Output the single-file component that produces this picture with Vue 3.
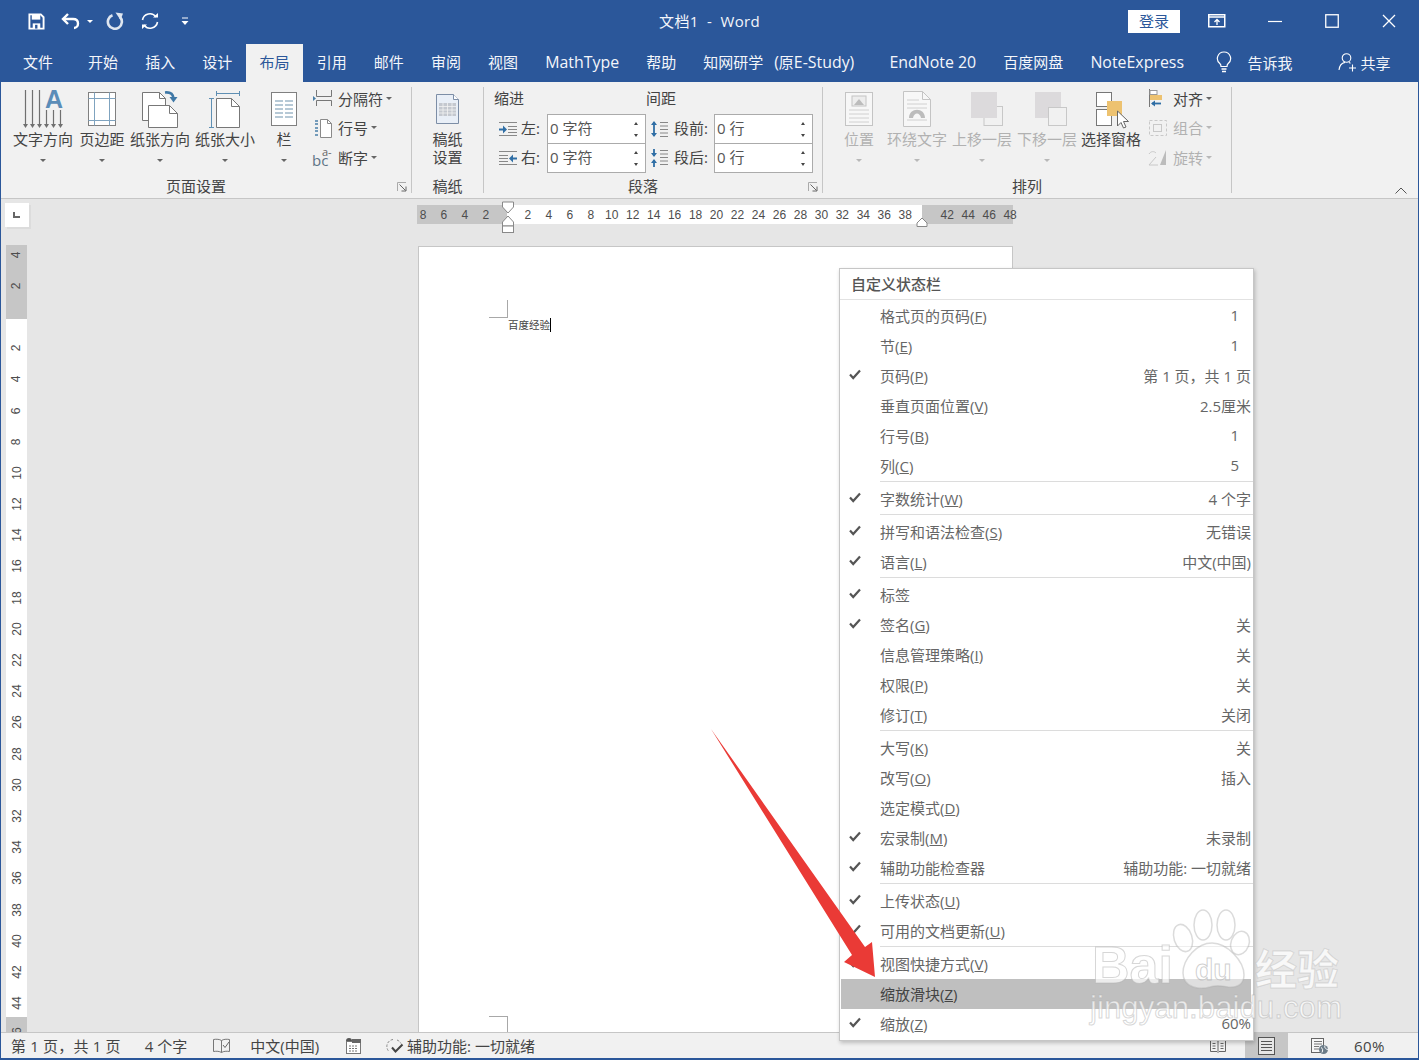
<template>
  <div class="window">
    <!-- title bar -->
    <header class="titlebar">
      <div class="qat">
        <svg class="q-save" width="17" height="17" viewBox="0 0 18 18"><path d="M1.500 1.500h12l3 3v12h-15z" fill="none" stroke="#fff" stroke-width="2"/><rect x="4" y="2" width="9" height="5" fill="#fff"/><rect x="5" y="11" width="8" height="5.500" fill="#fff"/><rect x="7.500" y="12.500" width="2.500" height="4" fill="#2b579a"/></svg>
        <svg class="q-undo" width="20" height="18" viewBox="0 0 20 18"><path d="M7 2 2 7l5 5" fill="none" stroke="#fff" stroke-width="2.400"/><path d="M3 7h9c3.500 0 5 2.200 5 4.500S15.500 16 13 16" fill="none" stroke="#fff" stroke-width="2.400"/></svg>
        <span class="caret white q-undo-caret"></span>
        <svg class="q-redo" width="18" height="18" viewBox="0 0 18 18"><path d="M6.500 3.200A7 7 0 1 0 14 5" fill="none" stroke="#dfe6f0" stroke-width="2.600"/><path d="M9.500 .5 17 1.500 14.500 8z" fill="#dfe6f0"/></svg>
        <svg class="q-sync" width="20" height="18" viewBox="0 0 20 18"><path d="M2.500 8A7.500 7.500 0 0 1 16 5" fill="none" stroke="#fff" stroke-width="1.600"/><path d="M17.500 10A7.500 7.500 0 0 1 4 13" fill="none" stroke="#fff" stroke-width="1.600"/><path d="M13 5.500h5V1zM7 12.500H2V17z" fill="#fff"/></svg>
        <svg class="q-more" width="8" height="9" viewBox="0 0 8 9"><path d="M1 1h6" stroke="#fff"/><path d="M.5 4h7L4 8z" fill="#fff"/></svg>
      </div>
      <div class="doc-title">文档1&nbsp;&nbsp;-&nbsp;&nbsp;Word</div>
      <div class="win-controls">
        <button class="login">登录</button>
        <svg class="w-ribbon" width="18" height="14" viewBox="0 0 18 14"><rect x=".75" y=".75" width="16" height="12" fill="none" stroke="#fff" stroke-width="1.500"/><path d="M1 3h16" stroke="#fff" stroke-width="1.500"/><path d="M9 11V6M6.500 8 9 5.500 11.500 8" fill="none" stroke="#fff" stroke-width="1.300"/></svg>
        <svg class="w-min" width="14" height="14" viewBox="0 0 14 14"><path d="M0 7.500h14" stroke="#fff" stroke-width="1.200"/></svg>
        <svg class="w-max" width="14" height="14" viewBox="0 0 14 14"><rect x=".75" y=".75" width="12.500" height="12.500" fill="none" stroke="#fff" stroke-width="1.300"/></svg>
        <svg class="w-close" width="14" height="14" viewBox="0 0 14 14"><path d="M1 1l12 12M13 1 1 13" stroke="#fff" stroke-width="1.300"/></svg>
      </div>
    </header>

    <!-- tabs -->
    <nav class="tabs">
      <span class="tab file">文件</span>
      <span v-for="t in tabs" :key="t" class="tab" :class="{ active: t === '布局', lat: t === 'MathType' }">{{ t }}</span>
      <span class="tab wide">知网研学 &nbsp;<span class="lat paren">(</span>原<span class="lat">E-Study)</span></span>
      <span class="tab lat">EndNote 20</span>
      <span class="tab">百度网盘</span>
      <span class="tab lat">NoteExpress</span>
      <svg class="bulb" width="16" height="22" viewBox="0 0 16 22"><path d="M8 1a6.500 6.500 0 0 0-4 11.700c.8.700 1 1.500 1 2.800h6c0-1.300.2-2.100 1-2.800A6.500 6.500 0 0 0 8 1z" fill="none" stroke="#fff" stroke-width="1.200"/><path d="M5.500 18h5M6 20.500h4" stroke="#fff" stroke-width="1.500"/></svg>
      <span class="tell">告诉我</span>
      <svg class="share-ic" width="20" height="20" viewBox="0 0 20 20"><circle cx="8.500" cy="6" r="4.300" fill="none" stroke="#fff" stroke-width="1.100"/><path d="M1 18c.5-4.500 3-7 6-7.600M11 10.500l1.500.7" fill="none" stroke="#fff" stroke-width="1.100"/><path d="M14.500 12.500v7M11 16h7" stroke="#fff" stroke-width="1.100"/></svg>
      <span class="share">共享</span>
    </nav>

    <!-- ribbon -->
    <section class="ribbon">
      <div class="group g-page">
        <div class="group-body">
          <div class="big w66">
            <svg width="44" height="44" viewBox="0 0 44 44">
              <g stroke="#707070" stroke-width="1.200" fill="none"><path d="M4.500 3v36M11.500 3v36M18.500 3v36M25.500 23v16M32.500 23v16M39.500 23v16"/></g>
              <path d="M2 37h5l-2.500 4zM9 37h5l-2.500 4zM16 37h5l-2.500 4zM23 37h5l-2.500 4zM30 37h5l-2.500 4zM37 37h5l-2.500 4z" fill="#707070"/>
              <text x="33" y="21" class="icon-a">A</text>
            </svg>
            <span>文字方向</span><i class="caret"></i>
          </div>
          <div class="big w52">
            <svg width="44" height="44" viewBox="0 0 44 44"><rect x="8.500" y="5.500" width="27" height="33" fill="#fff" stroke="#808080"/><path d="M14.500 5.500v33M29.500 5.500v33M8.500 11.500h27M8.500 33.500h27" stroke="#7fa3bf"/></svg>
            <span>页边距</span><i class="caret"></i>
          </div>
          <div class="big w64">
            <svg width="44" height="44" viewBox="0 0 44 44"><path d="M4.500 5.500h17l6 6v22h-23z" fill="#fff" stroke="#777"/><path d="M21.500 5.500v6h6" fill="none" stroke="#777"/><path d="M10.500 18.500h21l8 8v14h-29z" fill="#fff" stroke="#777"/><path d="M31.500 18.500v8h8" fill="none" stroke="#777"/><path d="M27 5.500c5-.5 8 1 8.500 6" fill="none" stroke="#3f78a6" stroke-width="2.600"/><path d="M31.500 10l4 5.500 4-5.500z" fill="#3f78a6"/></svg>
            <span>纸张方向</span><i class="caret"></i>
          </div>
          <div class="big w66">
            <svg width="44" height="44" viewBox="0 0 44 44"><path d="M13.500 11.500h15l8 8v21h-23z" fill="#fff" stroke="#777"/><path d="M28.500 11.500v8h8" fill="none" stroke="#777"/><path d="M13.500 6.500h23M13.500 4v5M36.500 4v5M8.500 11.500v29M6 11.500h5M6 40.500h5" stroke="#5f8fb3" fill="none"/></svg>
            <span>纸张大小</span><i class="caret"></i>
          </div>
          <div class="big w52">
            <svg width="44" height="44" viewBox="0 0 44 44"><rect x="9.500" y="5.500" width="25" height="33" fill="#fff" stroke="#808080"/><path d="M13 14h8M23 14h8M13 18h8M23 18h8M13 22h8M23 22h8M13 26h8M23 26h8M13 30h8M23 30h8" stroke="#6e93ad"/></svg>
            <span>栏</span><i class="caret"></i>
          </div>
          <div class="small-stack">
            <div class="small">
              <svg width="22" height="20" viewBox="0 0 22 20"><path d="M4.500 2v6.500h15V2M4.500 18v-5.500h15V18" fill="none" stroke="#777"/><path d="M1 8l3 2.500L1 13z" fill="#4a7fa8"/></svg>
              <span>分隔符</span><i class="caret"></i>
            </div>
            <div class="small">
              <svg width="22" height="20" viewBox="0 0 22 20"><path d="M8.500 1.500h7l4 4v14h-11z" fill="#fff" stroke="#8a8a8a"/><path d="M15.500 1.500v4h4" fill="none" stroke="#8a8a8a"/><path d="M3 3h3M3 6h3M3 10h3M3 13h3M3 17h3" stroke="#4a7fa8" stroke-width="1.300"/></svg>
              <span>行号</span><i class="caret"></i>
            </div>
            <div class="small">
              <svg width="22" height="20" viewBox="0 0 22 20"><text x="0" y="19" class="icon-bc">bc</text><text x="10" y="9" class="icon-hy">a-</text></svg>
              <span>断字</span><i class="caret"></i>
            </div>
          </div>
        </div>
        <div class="group-label">页面设置<svg class="launcher" width="10" height="10" viewBox="0 0 10 10"><path d="M.5 9V.5H9" fill="none" stroke="#aaa"/><path d="M2.500 2.500l6 6M9 4.500V9H4.500" fill="none" stroke="#666"/></svg></div>
      </div>

      <div class="group g-paper">
        <div class="group-body">
          <div class="big paper-btn">
            <svg width="44" height="44" viewBox="0 0 44 44"><path d="M10.500 7.500h17l5 5v24h-22z" fill="#e9eff7" stroke="#7d8ea6"/><path d="M27.500 7.500v5h5" fill="#fff" stroke="#7d8ea6"/><rect x="13" y="16" width="17" height="13" fill="#c4c8cf"/><path d="M13 19.500h17M13 23h17M13 26h17M17 16v13M21.500 16v13M26 16v13" stroke="#f3f3f3" stroke-width=".8"/></svg>
            <span>稿纸<br>设置</span>
          </div>
        </div>
        <div class="group-label">稿纸</div>
      </div>

      <div class="group g-para">
        <div class="group-body para">
          <div class="para-head"><span class="h-indent">缩进</span><span>间距</span></div>
          <div class="para-row">
            <svg class="p-ic" width="20" height="20" viewBox="0 0 20 20"><path d="M1 3.500h18M10 7.500h9M10 10.500h9M10 13.500h9M1 16.500h18" stroke="#888"/><path d="M1 10.500h5" stroke="#2f6ea5" stroke-width="2"/><path d="M5 6.500l4 4-4 4z" fill="#2f6ea5"/></svg>
            <label class="p-lab">左:</label>
            <div class="spin"><span>0 字符</span><i class="arrows"><b class="up"></b><b class="down"></b></i></div>
            <svg class="p-ic2" width="20" height="20" viewBox="0 0 20 20"><path d="M11 3.500h8M11 7h8M11 10.500h8M11 14h8M11 17.500h8" stroke="#888"/><path d="M5 3v14" stroke="#2f6ea5" stroke-width="1.800"/><path d="M2 6l3-4 3 4zM2 14l3 4 3-4z" fill="#2f6ea5"/></svg>
            <label class="p-lab2">段前:</label>
            <div class="spin"><span>0 行</span><i class="arrows"><b class="up"></b><b class="down"></b></i></div>
          </div>
          <div class="para-row second">
            <svg class="p-ic" width="20" height="20" viewBox="0 0 20 20"><path d="M1 3.500h18M1 7.500h9M1 10.500h9M1 13.500h9M1 16.500h18" stroke="#888"/><path d="M14 10.500h5" stroke="#2f6ea5" stroke-width="2"/><path d="M15 6.500l-4 4 4 4z" fill="#2f6ea5"/></svg>
            <label class="p-lab">右:</label>
            <div class="spin"><span>0 字符</span><i class="arrows"><b class="up"></b><b class="down"></b></i></div>
            <svg class="p-ic2" width="20" height="20" viewBox="0 0 20 20"><path d="M11 2.500h8M11 6h8M11 9.500h8M11 13h8M11 16.500h8" stroke="#888"/><path d="M5 1v7M5 12v7" stroke="#2f6ea5" stroke-width="1.800"/><path d="M2 5l3 4 3-4zM2 15l3-4 3 4z" fill="#2f6ea5"/></svg>
            <label class="p-lab2">段后:</label>
            <div class="spin"><span>0 行</span><i class="arrows"><b class="up"></b><b class="down"></b></i></div>
          </div>
        </div>
        <div class="group-label">段落<svg class="launcher" width="10" height="10" viewBox="0 0 10 10"><path d="M.5 9V.5H9" fill="none" stroke="#aaa"/><path d="M2.500 2.500l6 6M9 4.500V9H4.500" fill="none" stroke="#666"/></svg></div>
      </div>

      <div class="group g-arrange">
        <div class="group-body">
          <div class="big w52 off">
            <svg width="44" height="44" viewBox="0 0 44 44"><rect x="8.500" y="5.500" width="27" height="33" fill="#f7f7f7" stroke="#c4c4c4"/><rect x="15" y="9" width="14" height="10" fill="#ededed" stroke="#c4c4c4"/><path d="M17 18l5-6 5 6z" fill="#bcbcbc"/><path d="M12 23h20M12 27h20M12 31h20M12 35h20" stroke="#d0d0d0"/></svg>
            <span>位置</span><i class="caret"></i>
          </div>
          <div class="big w64 off">
            <svg width="44" height="44" viewBox="0 0 44 44"><path d="M8.500 4.500h19l8 8v27h-27z" fill="#f7f7f7" stroke="#c4c4c4"/><path d="M27.500 4.500v8h8" fill="none" stroke="#c4c4c4"/><path d="M12 13h12M12 17h20M12 21h20M12 33h20" stroke="#d0d0d0"/><path d="M14 31c0-11 16-11 16 0h-4c-1-6-7-6-8 0z" fill="#bcbcbc"/></svg>
            <span>环绕文字</span><i class="caret"></i>
          </div>
          <div class="big w66 off">
            <svg width="44" height="44" viewBox="0 0 44 44"><rect x="24" y="19.500" width="18.500" height="19" fill="none" stroke="#c8c8c8"/><rect x="11" y="5" width="26" height="26" fill="#dcdadc"/></svg>
            <span>上移一层</span><i class="caret"></i>
          </div>
          <div class="big w64 off">
            <svg width="44" height="44" viewBox="0 0 44 44"><rect x="10" y="5" width="26" height="26" fill="#dcdadc"/><rect x="23.500" y="20.500" width="18" height="18" fill="#f1f1f1" stroke="#c8c8c8"/></svg>
            <span>下移一层</span><i class="caret"></i>
          </div>
          <div class="big w64">
            <svg width="44" height="44" viewBox="0 0 44 44"><rect x="7.500" y="5.500" width="15" height="14" fill="#fff" stroke="#777"/><rect x="7.500" y="22.500" width="15" height="16" fill="#fff" stroke="#777"/><rect x="18" y="14" width="15" height="15" fill="#edc270"/><path d="M28.500 24v15l3.500-3.500 2.500 5.500 2.500-1-2.500-5.500h5z" fill="#fff" stroke="#666"/></svg>
            <span>选择窗格</span>
          </div>
          <div class="small-stack arrange-stack">
            <div class="small">
              <svg width="22" height="20" viewBox="0 0 22 20"><path d="M2.500 1v18" stroke="#777"/><rect x="3" y="2.500" width="7" height="4" fill="#fff" stroke="#999"/><rect x="3" y="7" width="12" height="5" fill="#edc270"/><path d="M5 15.500h9" stroke="#2f6ea5" stroke-width="1.800"/><path d="M8 12.500 4 15.500l4 3z" fill="#2f6ea5"/></svg>
              <span>对齐</span><i class="caret"></i>
            </div>
            <div class="small off">
              <svg width="22" height="20" viewBox="0 0 22 20"><rect x="2.500" y="2.500" width="17" height="15" fill="none" stroke="#c8c8c8" stroke-dasharray="3 2"/><rect x="6.500" y="6.500" width="8" height="7" fill="none" stroke="#c8c8c8"/></svg>
              <span>组合</span><i class="caret"></i>
            </div>
            <div class="small off">
              <svg width="22" height="20" viewBox="0 0 22 20"><path d="M19 18V3l-6 15z" fill="#bcbcbc"/><path d="M11 18H2l7-8" fill="none" stroke="#c8c8c8"/><path d="M2 7c2-3 5-3 7-1" fill="none" stroke="#c8c8c8"/></svg>
              <span>旋转</span><i class="caret"></i>
            </div>
          </div>
        </div>
        <div class="group-label">排列</div>
      </div>

      <div class="ribbon-rest">
        <svg width="12" height="7" viewBox="0 0 12 7"><path d="M.5 6.500 6 1l5.500 5.500" fill="none" stroke="#555"/></svg>
      </div>
    </section>

    <!-- document area -->
    <main class="doc-area">
      <div class="ruler-row">
        <div class="tab-stop"><i></i></div>
        <div class="h-ruler">
          <span v-for="(n, i) in hNumbers" :key="i" class="h-num">{{ n }}</span>
          <svg class="marker-left" width="14" height="32" viewBox="0 0 14 32"><path d="M1.500 1h11v5l-5.500 6-5.500-6z" fill="#fff" stroke="#888"/><path d="M7 15l5.500 6v4h-11v-4z" fill="#fff" stroke="#888"/><rect x="1.500" y="25" width="11" height="6.500" fill="#fff" stroke="#888"/></svg>
          <svg class="marker-right" width="12" height="10" viewBox="0 0 12 10"><path d="M6 1l5 5v3.500H1V6z" fill="#fff" stroke="#888"/></svg>
        </div>
      </div>
      <div class="doc-row">
        <div class="v-ruler">
          <span v-for="(n, i) in vNumbers" :key="i" class="v-num"><em>{{ n }}</em></span>
        </div>
        <div class="page">
          <div class="crop-top"></div>
          <div class="page-text"><span>百度经验</span></div>
          <div class="crop-bottom"></div>
        </div>
      </div>
    </main>

    <!-- status bar -->
    <footer class="status">
      <span class="s-pages">第 1 页，共 1 页</span>
      <span class="s-words">4 个字</span>
      <svg class="s-book" width="19" height="16" viewBox="0 0 19 16"><path d="M9.500 2.500c-2-1.300-5-1.500-8-1v12c3-.5 6-.3 8 1 2-1.300 5-1.500 8-1v-12c-3-.5-6-.3-8 1zM9.500 2.500v12" fill="none" stroke="#777"/><path d="M11 7l2 2.500L17 4" fill="none" stroke="#666"/></svg>
      <span class="s-lang">中文(中国)</span>
      <svg class="s-macro" width="15" height="16" viewBox="0 0 15 16"><circle cx="3" cy="3" r="3" fill="#555"/><rect x=".5" y="3.500" width="14" height="12" fill="#fff" stroke="#777"/><rect x="6" y="1" width="9" height="4" fill="#666"/><path d="M3 8h9M3 10.500h9M3 13h9" stroke="#777" stroke-dasharray="2 1"/></svg>
      <svg class="s-access" width="20" height="18" viewBox="0 0 20 18"><path d="M8 2.500a7 7 0 0 0-4 12" fill="none" stroke="#888" stroke-dasharray="2.500 1.500"/><path d="M12 3a7 7 0 0 1 4 3.500" fill="none" stroke="#888" stroke-dasharray="2.500 1.500"/><path d="M7 10.500l3.500 4 7-7" fill="none" stroke="#444" stroke-width="2"/></svg>
      <span class="s-acc-text">辅助功能: 一切就绪</span>
      <span class="s-gap"></span>
      <svg class="s-read" width="16" height="14" viewBox="0 0 16 14"><path d="M.5 1.500h6.500l1 1 1-1h6.500v11H9l-1 1-1-1H.5z" fill="none" stroke="#666"/><path d="M8 2.500v10M2.500 4.500h3M2.500 7h3M2.500 9.500h3M10.500 4.500h3M10.500 7h3M10.500 9.500h3" stroke="#666"/></svg>
      <div class="s-print"><svg width="17" height="18" viewBox="0 0 17 18"><rect x=".5" y=".5" width="16" height="17" fill="#e6e6e6" stroke="#555"/><path d="M3 4.500h11M3 7.500h11M3 10.500h11M3 13.500h11" stroke="#555"/></svg></div>
      <svg class="s-web" width="18" height="18" viewBox="0 0 18 18"><rect x=".5" y="1.500" width="12" height="14" fill="#f7f7f7" stroke="#666"/><path d="M3 4.500h8M3 7h8M3 9.500h5M3 12h5" stroke="#777"/><circle cx="12.500" cy="12.500" r="4.500" fill="#6c7c88"/><path d="M10 10.500c2 1 2 3 1 5M14 8.500c-1 2 1 4 3 4" fill="none" stroke="#fff"/></svg>
      <span class="s-zoom">60%</span>
    </footer>

    <!-- context menu -->
    <div class="menu">
      <div class="menu-title">自定义状态栏</div>
      <template v-for="row in menuRows" :key="row.label">
        <div v-if="row.sep" class="menu-sep"></div>
        <div class="menu-row" :class="{ hover: row.hover }">
          <span class="menu-check">
            <svg v-if="row.on" width="12" height="11" viewBox="0 0 12 11"><path d="M1 5.500 4.200 9 11 1.500" fill="none" stroke="#555" stroke-width="2.200"/></svg>
          </span>
          <span class="menu-label">{{ row.label }}<template v-if="row.key">(<u>{{ row.key }}</u>)</template></span>
          <span class="menu-value" :class="{ num: row.num }">{{ row.value }}</span>
        </div>
      </template>
    </div>

    <!-- red arrow on top of screenshot -->
    <svg class="red-arrow" width="180" height="260" viewBox="0 0 180 260">
      <path d="M1 1 155 219l7-5 3 35-31-15 8-7z" fill="#ea3a36"/>
    </svg>

    <!-- watermark -->
    <svg class="watermark" width="270" height="130" viewBox="0 0 270 130">
      <g class="wm-paw">
        <ellipse cx="96" cy="33" rx="9" ry="14" transform="rotate(-18 96 33)"/>
        <ellipse cx="116" cy="20" rx="9" ry="15"/>
        <ellipse cx="139" cy="20" rx="9" ry="15"/>
        <ellipse cx="153" cy="38" rx="9" ry="12" transform="rotate(20 153 38)"/>
        <path d="M96 68c0-14 14-30 29-30s32 18 32 32c0 10-8 13-16 12-6-1-12-2-18 0-10 3-27 1-27-14z"/>
      </g>
      <text x="5" y="78" class="wm-bai">Bai</text>
      <text x="108" y="75" class="wm-du">du</text>
      <text x="168" y="80" class="wm-cn">经验</text>
      <text x="3" y="113" class="wm-url" textLength="252" lengthAdjust="spacingAndGlyphs">jingyan.baidu.com</text>
    </svg>
  </div>
</template>

<script setup>
const tabs = ['开始', '插入', '设计', '布局', '引用', '邮件', '审阅', '视图', 'MathType', '帮助']

// null leaves a blank cell where the ruler has no label
const hNumbers = [8, 6, 4, 2, null, 2, 4, 6, 8, 10, 12, 14, 16, 18, 20, 22, 24, 26, 28, 30, 32, 34, 36, 38, null, 42, 44, 46, 48]
const vNumbers = [4, 2, null]
for (let n = 2; n <= 44; n += 2) vNumbers.push(n)
vNumbers.push(46)

const menuRows = [
  { label: '格式页的页码', key: 'F', value: '1', num: true },
  { label: '节', key: 'E', value: '1', num: true },
  { label: '页码', key: 'P', value: '第 1 页，共 1 页', on: true },
  { label: '垂直页面位置', key: 'V', value: '2.5厘米' },
  { label: '行号', key: 'B', value: '1', num: true },
  { label: '列', key: 'C', value: '5', num: true },
  { label: '字数统计', key: 'W', value: '4 个字', on: true, sep: true },
  { label: '拼写和语法检查', key: 'S', value: '无错误', on: true, sep: true },
  { label: '语言', key: 'L', value: '中文(中国)', on: true },
  { label: '标签', value: '', on: true, sep: true },
  { label: '签名', key: 'G', value: '关', on: true },
  { label: '信息管理策略', key: 'I', value: '关' },
  { label: '权限', key: 'P', value: '关' },
  { label: '修订', key: 'T', value: '关闭' },
  { label: '大写', key: 'K', value: '关', sep: true },
  { label: '改写', key: 'O', value: '插入' },
  { label: '选定模式', key: 'D', value: '' },
  { label: '宏录制', key: 'M', value: '未录制', on: true },
  { label: '辅助功能检查器', value: '辅助功能: 一切就绪', on: true },
  { label: '上传状态', key: 'U', value: '', on: true, sep: true },
  { label: '可用的文档更新', key: 'U', value: '', on: true },
  { label: '视图快捷方式', key: 'V', value: '', on: true, sep: true },
  { label: '缩放滑块', key: 'Z', value: '', hover: true },
  { label: '缩放', key: 'Z', value: '60%', on: true },
]
</script>

<style>
html, body { margin: 0; overflow: hidden; background: #e6e6e6; }
</style>

<style scoped>
.window {
  position: relative;
  width: 1419px;
  height: 1060px;
  box-sizing: border-box;
  border: 1px solid #2b579a;
  border-width: 0 1px 2px 1px;
  display: flex;
  flex-direction: column;
  overflow: hidden;
  font-family: "Open Sans", "Noto Sans CJK SC", sans-serif;
  font-size: 15px;
  color: #444;
  background: #e6e6e6;
}

/* title bar */
.titlebar {
  height: 42px;
  flex: none;
  background: #2b579a;
  color: #fff;
  display: grid;
  grid-template-columns: 1fr auto 1fr;
  align-items: center;
}
.qat { display: flex; align-items: center; }
.qat svg { flex: none; }
.q-save { margin-left: 27px; }
.q-undo { margin-left: 16px; }
.q-undo-caret { margin-left: 6px; }
.q-redo { margin-left: 13px; }
.q-sync { margin-left: 16px; }
.q-more { margin-left: 21px; }
.doc-title { font-size: 15px; color: #f4f6fa; padding-bottom: 2px; letter-spacing: .3px; }
.win-controls { display: flex; align-items: center; justify-content: flex-end; }
.login {
  width: 52px;
  height: 23px;
  border: 0;
  padding: 0;
  background: #fff;
  color: #2b579a;
  font: inherit;
  line-height: 23px;
}
.w-ribbon { margin-left: 28px; }
.w-min { margin-left: 42px; }
.w-max { margin-left: 43px; }
.w-close { margin-left: 43px; margin-right: 22px; }

/* tabs */
.tabs {
  height: 40px;
  flex: none;
  background: #2b579a;
  color: #f4f6fa;
  display: flex;
  align-items: center;
  padding-left: 9px;
  white-space: nowrap;
}
.tab {
  padding: 0 13.57px;
  height: 38px;
  margin-top: 2px;
  line-height: 36px;
}
.tab.file { margin-right: 8px; padding-left: 13px; padding-right: 13.5px; }
.tab.active { background: #f1f1f1; color: #2b579a; }
.tab.wide { margin-right: 8px; }
.lat { font-size: 15.9px; }
.paren { margin-left: 3px; }
.bulb { margin-left: 18px; flex: none; }
.tell { margin-left: 16px; }
.share-ic { margin-left: 45px; flex: none; }
.share { margin-left: 3px; }

/* ribbon */
.ribbon {
  height: 117px;
  flex: none;
  box-sizing: border-box;
  background: #f1f1f1;
  border-bottom: 1px solid #c6c6c6;
  display: flex;
  align-items: flex-start;
  padding-top: 5px;
}
.group {
  height: 106px;
  display: flex;
  flex-direction: column;
  border-right: 1px solid #c6c6c6;
  box-sizing: content-box;
  flex: none;
}
.g-page { width: 410px; }
.g-paper { width: 71px; }
.g-para { width: 338px; }
.g-arrange { width: 408px; }
.group-body { display: flex; height: 90px; flex: none; }
.g-page .group-body { padding-left: 9px; }
.g-arrange .group-body { padding-left: 10px; }
.group-label {
  position: relative;
  height: 16px;
  line-height: 18px;
  text-align: center;
}
.g-page .group-label, .g-para .group-label { padding-right: 20px; }
.launcher { position: absolute; right: 4px; top: 5px; }

.big {
  display: flex;
  flex-direction: column;
  align-items: center;
  flex: none;
  line-height: 18px;
  white-space: nowrap;
  text-align: center;
}
.big svg { flex: none; margin-bottom: -1px; overflow: visible; }
.w66 { width: 66px; }
.w64 { width: 64px; }
.w52 { width: 52px; }
.paper-btn { width: 71px; }
.big .caret { margin-top: 11px; }
.off { color: #b1b1b1; }
.off .caret { border-top-color: #b8b8b8; }

.caret {
  display: inline-block;
  width: 0;
  height: 0;
  border: 3px solid transparent;
  border-top: 3px solid #666;
  border-bottom: 0;
  flex: none;
}
.caret.white { border-top-color: #fff; }

.small-stack {
  display: flex;
  flex-direction: column;
  margin-left: 2px;
  margin-top: -3.5px;
}
.arrange-stack { margin-left: 4px; }
.small {
  height: 29.5px;
  display: flex;
  align-items: center;
  white-space: nowrap;
}
.small svg { flex: none; margin-right: 4px; overflow: visible; }
.small .caret { margin-left: 3px; }
.icon-a { font: bold 25px "Liberation Sans", sans-serif; fill: #5b8db8; text-anchor: middle; }
.icon-bc { font: 15px "Open Sans", sans-serif; fill: #5e7486; }
.icon-hy { font: 11px "Open Sans", sans-serif; fill: #666; }

/* paragraph group */
.para { flex-direction: column; padding-left: 10px; }
.para-head { display: flex; height: 27px; line-height: 22px; }
.h-indent { width: 152px; }
.para-row { display: flex; align-items: center; height: 30px; }
.para-row.second { margin-top: -1px; }
.para-row label, .spin span { margin-bottom: 4px; }
.p-ic { margin-left: 4px; flex: none; }
.p-lab { margin-left: 3px; width: 26px; flex: none; }
.p-ic2 { margin-left: 3px; flex: none; }
.p-lab2 { margin-left: 5px; width: 40px; flex: none; }
.spin {
  width: 99px;
  height: 30px;
  box-sizing: border-box;
  border: 1px solid #ababab;
  background: #fff;
  display: flex;
  align-items: center;
  justify-content: space-between;
  padding: 0 7px 0 2px;
  flex: none;
  color: #555;
}
.arrows { display: flex; flex-direction: column; gap: 9px; }
.arrows b { display: block; width: 0; height: 0; border: 2.5px solid transparent; }
.arrows .up { border-top: 0; border-bottom: 3px solid #444; }
.arrows .down { border-bottom: 0; border-top: 3px solid #444; }

.ribbon-rest {
  flex: 1;
  height: 107px;
  display: flex;
  align-items: flex-end;
  justify-content: flex-end;
  padding: 0 11px 0 0;
}

/* document area */
.doc-area { flex: 1; min-height: 0; display: flex; flex-direction: column; }
.ruler-row { height: 46px; flex: none; display: flex; align-items: flex-start; }
.tab-stop {
  width: 24px;
  height: 24px;
  margin: 4px 0 0 4px;
  background: #fff;
  box-shadow: 2px 2px 0 #dcdcdc;
  position: relative;
  flex: none;
}
.tab-stop i {
  display: block;
  position: absolute;
  left: 8px;
  top: 9px;
  border-left: 2px solid #666;
  border-bottom: 2px solid #666;
  width: 5px;
  height: 4px;
}
.h-ruler {
  position: relative;
  width: 596px;
  height: 19px;
  margin: 6px 0 0 388px;
  display: flex;
  background: linear-gradient(to right, #c6c6c6 90px, #fff 90px, #fff 505px, #c6c6c6 505px);
}
.h-num {
  flex: none;
  width: 20.97px;
  text-align: center;
  font: 12px/21px "Liberation Sans", sans-serif;
  color: #4d4d4d;
}
.h-num:first-child { margin-left: -4.5px; }
.marker-left { position: absolute; left: 84px; top: -4px; }
.marker-right { position: absolute; left: 499px; top: 12px; }

.doc-row { flex: 1; min-height: 0; display: flex; }
.v-ruler {
  width: 21px;
  margin-left: 5px;
  flex: none;
  overflow: hidden;
  display: flex;
  flex-direction: column;
  background: linear-gradient(to bottom, #c6c6c6 74px, #fff 74px, #fff 772px, #c6c6c6 772px);
}
.v-num {
  flex: none;
  height: 31.2px;
  display: flex;
  align-items: center;
  justify-content: center;
  font: 12px "Liberation Sans", sans-serif;
  color: #4d4d4d;
}
.v-num:first-child { margin-top: -6px; }
.v-num em { font-style: normal; transform: rotate(-90deg); }
.page {
  width: 593px;
  margin: 1px 0 0 391px;
  background: #fff;
  border: 1px solid #c6c6c6;
  border-bottom: 0;
  box-sizing: content-box;
  display: flex;
  flex-direction: column;
}
.crop-top {
  width: 18px;
  height: 17px;
  margin: 53px 0 0 70px;
  border-right: 1px solid #a8a8a8;
  border-bottom: 1px solid #a8a8a8;
  flex: none;
}
.page-text {
  margin: 0 0 0 89px;
  font-size: 10.5px;
  line-height: 14px;
  color: #444;
}
.page-text span { display: inline-block; border-right: 1px solid #000; }
.crop-bottom {
  margin: auto 0 0 70px;
  width: 18px;
  height: 15px;
  border-top: 1px solid #a8a8a8;
  border-right: 1px solid #a8a8a8;
  flex: none;
}

/* status bar */
.status {
  height: 26px;
  flex: none;
  box-sizing: border-box;
  background: #f1f1f1;
  border-top: 1px solid #c6c6c6;
  display: flex;
  align-items: center;
  white-space: nowrap;
  position: relative;
}
.status svg { flex: none; }
.s-pages { margin-left: 10px; letter-spacing: .18px; }
.s-words { margin-left: 24px; }
.s-book { margin-left: 25px; }
.s-lang { margin-left: 19px; }
.s-macro { margin-left: 27px; }
.s-access { margin-left: 24px; }
.s-acc-text { margin-left: 2px; }
.s-gap { flex: 1; }
.s-read { margin-right: 19px; }
.s-print {
  width: 43px;
  height: 25px;
  background: #c6c6c6;
  display: flex;
  align-items: center;
  justify-content: center;
}
.s-web { margin-left: 23px; }
.s-zoom { margin: 0 33px 0 25px; letter-spacing: .5px; }

/* context menu */
.menu {
  position: absolute;
  left: 838px;
  top: 268px;
  width: 415px;
  box-sizing: border-box;
  background: #fff;
  border: 1px solid #c6c6c6;
  box-shadow: 1px 2px 4px rgba(0, 0, 0, .22);
  color: #666;
  padding-bottom: 1px;
}
.menu-title {
  height: 30px;
  line-height: 30px;
  padding-left: 11px;
  font-weight: 500;
  color: #555;
  border-bottom: 1px solid #e2e2e2;
  margin-bottom: 1px;
}
.menu-row {
  height: 30px;
  margin: 0 2px 0 1px;
  display: flex;
  align-items: center;
  white-space: nowrap;
}
.menu-row.hover { background: #bfbfbf; color: #444; }
.menu-check { width: 39px; flex: none; padding-left: 8px; box-sizing: border-box; display: flex; margin-top: -3px; }
.menu-label { flex: 1; padding-bottom: 2px; }
.menu-value { text-align: right; padding-bottom: 2px; }
.menu-value.num { padding-right: 12px; }
.menu-sep {
  height: 3px;
  margin-left: 40px;
  box-sizing: border-box;
  border-bottom: 2px solid #fff;
  border-top: 1px solid #dcdcdc;
}

.red-arrow { position: absolute; left: 709px; top: 728px; pointer-events: none; }

.watermark { position: absolute; left: 1086px; top: 905px; pointer-events: none; }
.wm-paw ellipse, .wm-paw path { fill: rgba(255, 255, 255, .5); stroke: rgba(175, 175, 175, .45); stroke-width: 1.5; }
.wm-bai { font: bold 52px "Liberation Sans", sans-serif; fill: rgba(255, 255, 255, .7); stroke: rgba(175, 175, 175, .5); }
.wm-du { font: bold 30px "Liberation Sans", sans-serif; fill: rgba(255, 255, 255, .1); stroke: rgba(175, 175, 175, .6); }
.wm-cn { font: bold 42px "Noto Sans CJK SC", sans-serif; fill: rgba(255, 255, 255, .75); stroke: rgba(175, 175, 175, .4); }
.wm-url { font: 32px "Liberation Sans", sans-serif; fill: rgba(255, 255, 255, .7); stroke: rgba(175, 175, 175, .5); }
</style>
